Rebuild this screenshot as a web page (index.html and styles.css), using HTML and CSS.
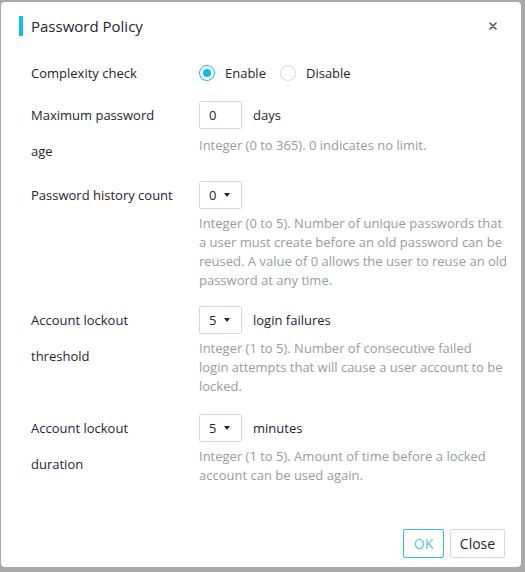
FILE: index.html
```html
<!DOCTYPE html>
<html>
<head>
<meta charset="utf-8">
<link rel="stylesheet" href="styles.css">
</head>
<body>
<div class="dialog">
  <div class="header">
    <span class="accent"></span>
    <span class="title">Password Policy</span>
    <span class="close">
      <svg width="8" height="8" viewBox="0 0 8 8"><path d="M1 1L7 7M7 1L1 7" stroke="#4a5563" stroke-width="1.5" stroke-linecap="round"/></svg>
    </span>
  </div>
  <div class="body">
    <div class="row row-a">
      <div class="label">Complexity check</div>
      <div class="control">
        <div class="radios">
          <label class="radio"><span class="circle on"></span><span>Enable</span></label>
          <label class="radio"><span class="circle"></span><span>Disable</span></label>
        </div>
      </div>
    </div>
    <div class="row row-b">
      <div class="label">Maximum password<br>age</div>
      <div class="control">
        <div class="line"><span class="box input">0</span><span class="unit">days</span></div>
        <div class="hint hint-b">Integer (0 to 365). 0 indicates no limit.</div>
      </div>
    </div>
    <div class="row row-c">
      <div class="label">Password history count</div>
      <div class="control">
        <div class="line"><span class="box select">0<span class="caret"></span></span></div>
        <div class="hint">Integer (0 to 5). Number of unique passwords that<br>a user must create before an old password can be<br>reused. A value of 0 allows the user to reuse an old<br>password at any time.</div>
      </div>
    </div>
    <div class="row row-d">
      <div class="label">Account lockout<br>threshold</div>
      <div class="control">
        <div class="line"><span class="box select">5<span class="caret"></span></span><span class="unit">login failures</span></div>
        <div class="hint">Integer (1 to 5). Number of consecutive failed<br>login attempts that will cause a user account to be<br>locked.</div>
      </div>
    </div>
    <div class="row">
      <div class="label">Account lockout<br>duration</div>
      <div class="control">
        <div class="line"><span class="box select">5<span class="caret"></span></span><span class="unit">minutes</span></div>
        <div class="hint">Integer (1 to 5). Amount of time before a locked<br>account can be used again.</div>
      </div>
    </div>
  </div>
  <div class="footer">
    <button class="btn ok">OK</button>
    <button class="btn">Close</button>
  </div>
</div>
</body>
</html>
```
FILE: styles.css
```css
html, body {
  margin: 0;
  padding: 0;
  background: #a8a8a8;
}
body {
  width: 525px;
  height: 572px;
  overflow: hidden;
  font-family: "Open Sans", "Noto Sans", sans-serif;
  font-size: 13px;
  color: #1f2530;
}
.dialog {
  box-sizing: border-box;
  margin: 2px 0 0 1px;
  width: 520px;
  height: 565px;
  background: #fff;
  border-radius: 4px;
  display: flex;
  flex-direction: column;
}
.header {
  display: flex;
  align-items: center;
  height: 20px;
  padding: 14px 0 0 18px;
}
.accent {
  width: 4px;
  height: 20px;
  background: #0abcf7;
  margin-right: 8px;
}
.title {
  font-size: 15px;
  color: #1f2530;
  flex: 1;
}
.close {
  width: 8px;
  height: 8px;
  margin-right: 24px;
  display: flex;
}
.body {
  padding: 19px 16px 0 30px;
  flex: 1;
}
.row {
  display: flex;
  margin-bottom: 12px;
}
.row-a { margin-bottom: 6px; }
.row-b { margin-bottom: 8px; }
.row-c { margin-bottom: 12px; }
.row-d { margin-bottom: 14px; }
.label {
  width: 168px;
  flex: none;
  line-height: 36px;
}
.control {
  flex: 1;
  padding-top: 4px;
}
.radios {
  display: flex;
  align-items: center;
  height: 28px;
}
.radio {
  display: flex;
  align-items: center;
  margin-right: 14px;
}
.circle {
  box-sizing: border-box;
  width: 16px;
  height: 16px;
  border: 1px solid #d3d6dc;
  border-radius: 50%;
  margin-right: 10px;
  display: flex;
  align-items: center;
  justify-content: center;
}
.circle.on {
  border-color: #0abcf7;
}
.circle.on::after {
  content: "";
  width: 8px;
  height: 8px;
  border-radius: 50%;
  background: #0abcf7;
}
.line {
  display: flex;
  align-items: center;
  height: 28px;
}
.box {
  box-sizing: border-box;
  width: 43px;
  height: 28px;
  border: 1px solid #d6d9de;
  border-radius: 2px;
  display: flex;
  align-items: center;
  padding-left: 9px;
  color: #1f2530;
}
.caret {
  width: 0;
  height: 0;
  border-left: 3.5px solid transparent;
  border-right: 3.5px solid transparent;
  border-top: 4px solid #1f2530;
  margin-left: 8px;
}
.unit {
  margin-left: 11px;
}
.hint {
  margin-top: 5px;
  line-height: 19px;
  color: #999ba0;
  white-space: nowrap;
}
.hint-b {
  margin-top: 7px;
}
.footer {
  display: flex;
  justify-content: flex-end;
  gap: 6px;
  padding: 0 16px 9px 0;
}
.btn {
  box-sizing: border-box;
  height: 29px;
  width: 55px;
  padding: 0;
  font-family: inherit;
  font-size: 14px;
  background: #fff;
  border: 1px solid #d6d9de;
  border-radius: 2px;
  color: #1f2530;
}
.btn.ok {
  border-color: #2ebbf5;
  color: #52c3f5;
  width: 41px;
}
```
